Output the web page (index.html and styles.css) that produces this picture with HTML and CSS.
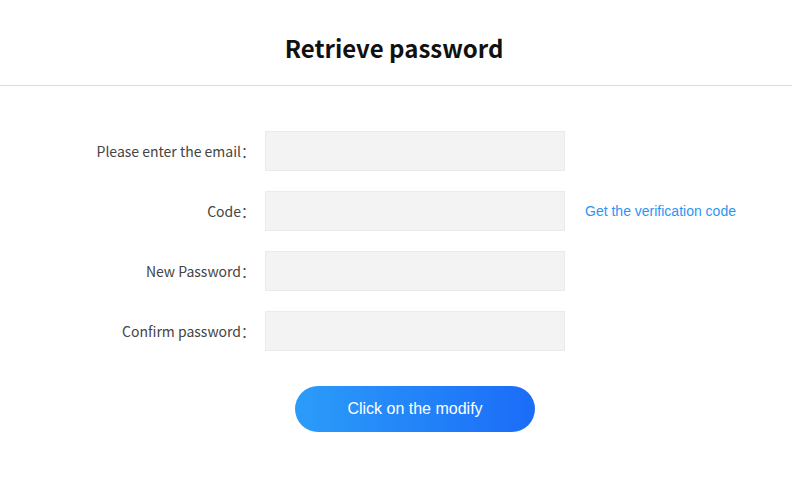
FILE: index.html
```html
<!DOCTYPE html>
<html>
<head>
<meta charset="utf-8">
<link rel="stylesheet" href="styles.css">
</head>
<body>
<header class="header"><h1 class="title">Retrieve password</h1></header>
<main class="form">
  <div class="row">
    <label class="label">Please enter the email：</label>
    <div class="input"></div>
  </div>
  <div class="row">
    <label class="label">Code：</label>
    <div class="input"></div>
    <a class="link">Get the verification code</a>
  </div>
  <div class="row">
    <label class="label">New Password：</label>
    <div class="input"></div>
  </div>
  <div class="row">
    <label class="label">Confirm password：</label>
    <div class="input"></div>
  </div>
  <div class="actions">
    <button class="btn">Click on the modify</button>
  </div>
</main>
</body>
</html>
```
FILE: styles.css
```css
html, body {
  margin: 0;
  padding: 0;
  background: #fff;
}
body {
  font-family: "Noto Sans CJK SC", "Noto Sans", sans-serif;
  color: #333;
}
.header {
  height: 85px;
  border-bottom: 1px solid #dcdcdc;
  display: flex;
  align-items: center;
  justify-content: center;
}
.title {
  margin: 0 4px 0 0;
  font-size: 24px;
  font-weight: bold;
  color: #111;
  padding-top: 10px;
}
.form {
  padding-top: 45px;
  display: flex;
  flex-direction: column;
  gap: 20px;
}
.row {
  display: flex;
  align-items: center;
  height: 40px;
}
.label {
  width: 255px;
  text-align: right;
  font-size: 14px;
  color: #444;
  margin-right: 10px;
}
.input {
  width: 298px;
  height: 38px;
  background: #f3f3f3;
  border: 1px solid #ebebeb;
}
.link {
  margin-left: 20px;
  font-family: "Liberation Sans", Arial, sans-serif;
  font-size: 14px;
  color: #2b95f4;
}
.actions {
  display: flex;
  justify-content: center;
  width: 300px;
  margin-left: 265px;
  padding-top: 15px;
}
.btn {
  width: 240px;
  height: 46px;
  border: none;
  border-radius: 23px;
  background: linear-gradient(90deg, #2b9cf9, #1b6cf8);
  color: #fff;
  font-family: "Liberation Sans", Arial, sans-serif;
  font-size: 16px;
  padding: 0;
}
```
